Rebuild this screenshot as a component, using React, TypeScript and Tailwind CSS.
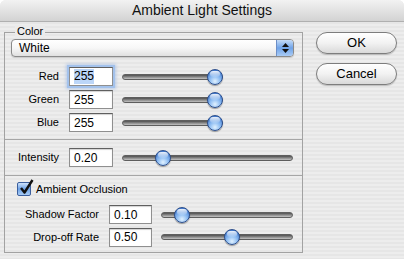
import React from "react";

const Slider: React.FC<{ value: number; width: string }> = ({ value, width }) => {
  return (
    <div className={`relative h-[16px] ${width}`}>
      <div className="absolute left-0 right-0 top-[5px] h-[6px] rounded-full border border-[#5e5e5e] bg-gradient-to-b from-[#4f4f4f] via-[#8a8a8a] to-[#c4c4c4]" />
      <div
        className="absolute top-0 h-[16px] w-[16px] rounded-full border border-[#2d4f8c] bg-[radial-gradient(circle_at_50%_80%,#e0f1ff_0%,#8dbcf2_40%,#3f78cf_85%,#2c5aa8_100%)] shadow-[0_1px_1px_rgba(0,0,0,0.35)]"
        style={{ left: `calc(${value * 100}% - ${value * 16}px)` }}
      >
        <div className="mx-auto mt-[1px] h-[6px] w-[10px] rounded-full bg-gradient-to-b from-white/90 to-white/10" />
      </div>
    </div>
  );
};

const Field: React.FC<{ value: string; width: string; focused?: boolean }> = ({ value, width, focused }) => {
  return (
    <div
      className={`flex h-[19px] items-center border border-[#8f8f8f] border-t-[#5f5f5f] bg-white pl-[4px] text-[12px] text-black ${width} ${
        focused
          ? "shadow-[0_0_0_2px_#a3c2ec,0_0_3px_3px_rgba(140,175,225,0.55)]"
          : "shadow-[inset_0_1px_1px_rgba(0,0,0,0.18)]"
      }`}
    >
      {focused ? <span className="bg-[#bcd6f8] leading-[15px]">{value}</span> : value}
    </div>
  );
};

const AquaButton: React.FC<{ label: string }> = ({ label }) => (
  <button className="h-[22px] w-[81px] rounded-full border border-[#7d7d7d] bg-gradient-to-b from-white via-[#f2f2f2] to-[#d9d9d9] text-[13px] text-black shadow-[0_1px_1px_rgba(0,0,0,0.2)]">
    {label}
  </button>
);

export default function App() {
  return (
    <div className="h-[259px] w-[404px] overflow-hidden bg-white font-['Liberation_Sans',Arial,sans-serif] text-[11px] text-black">
      <div className="flex h-full flex-col rounded-t-[6px] bg-[repeating-linear-gradient(to_bottom,#ededed_0px,#ededed_2px,#e6e6e6_2px,#e6e6e6_4px)]">
        {/* title bar */}
        <div className="flex h-[22px] items-center justify-center rounded-t-[6px] border-b border-[#b0b0b0] bg-gradient-to-b from-[#f2f2f2] to-[#d3d3d3] text-[14px] text-[#111]">
          Ambient Light Settings
        </div>

        <div className="flex flex-1 pl-[4px]">
          {/* group box */}
          <div className="relative mt-[10px] flex h-[221px] w-[299px] flex-col border border-[#a2a2a2]">
            <span className="absolute left-[10px] top-[-8px] bg-[#ebebeb] px-[2px] text-[11px] leading-[13px]">
              Color
            </span>

            <div className="flex h-[106px] flex-col pt-[6px]">
              <div className="ml-[6px] flex h-[18px] w-[283px] items-center overflow-hidden rounded-[4px] border border-[#8a8a8a] bg-gradient-to-b from-white via-[#f7f7f7] to-[#e0e0e0] shadow-[0_1px_1px_rgba(0,0,0,0.15)]">
                <span className="flex-1 pl-[7px] text-[12px]">White</span>
                <div className="flex h-full w-[17px] flex-col items-center justify-center gap-[2px] border-l border-[#6d8fc7] bg-gradient-to-b from-[#c5dcf8] via-[#6fa3e8] to-[#a9cbf5]">
                  <svg width="7" height="4" viewBox="0 0 7 4">
                    <path d="M3.5 0 L7 4 L0 4 Z" fill="#111" />
                  </svg>
                  <svg width="7" height="4" viewBox="0 0 7 4">
                    <path d="M0 0 L7 0 L3.5 4 Z" fill="#111" />
                  </svg>
                </div>
              </div>

              <div className="mt-[8px] flex flex-col">
                {[
                  { label: "Red", focused: true },
                  { label: "Green", focused: false },
                  { label: "Blue", focused: false },
                ].map((row) => (
                  <div key={row.label} className="flex h-[23px] items-center">
                    <span className="w-[54px] text-right">{row.label}</span>
                    <div className="ml-[10px]">
                      <Field value="255" width="w-[44px]" focused={row.focused} />
                    </div>
                    <div className="ml-[9px]">
                      <Slider value={1} width="w-[101px]" />
                    </div>
                  </div>
                ))}
              </div>
            </div>

            <div className="h-[1px] bg-[#a6a6a6]" />

            <div className="flex h-[35px] items-center">
              <span className="w-[54px] text-right">Intensity</span>
              <div className="ml-[10px]">
                <Field value="0.20" width="w-[44px]" />
              </div>
              <div className="ml-[9px]">
                <Slider value={0.21} width="w-[171px]" />
              </div>
            </div>

            <div className="h-[1px] bg-[#a6a6a6]" />

            <div className="flex flex-1 flex-col pt-[5px]">
              <div className="flex h-[16px] items-center">
                <div className="relative ml-[12px] h-[14px] w-[14px] rounded-[2px] border border-[#3b5f9e] bg-gradient-to-b from-[#cfe3fb] via-[#6da2e6] to-[#a8ccf6]">
                  <svg className="absolute left-[1px] top-[-4px]" width="15" height="16" viewBox="0 0 15 16">
                    <path d="M2 9 L5.5 13.5 L13.5 1" stroke="#111" strokeWidth="2.4" fill="none" strokeLinejoin="round" />
                  </svg>
                </div>
                <span className="ml-[5px]">Ambient Occlusion</span>
              </div>

              <div className="mt-[6px] flex h-[23px] items-center">
                <span className="w-[94px] text-right">Shadow Factor</span>
                <div className="ml-[10px]">
                  <Field value="0.10" width="w-[43px]" />
                </div>
                <div className="ml-[9px]">
                  <Slider value={0.11} width="w-[132px]" />
                </div>
              </div>

              <div className="flex h-[22px] items-center">
                <span className="w-[94px] text-right">Drop-off Rate</span>
                <div className="ml-[10px]">
                  <Field value="0.50" width="w-[43px]" />
                </div>
                <div className="ml-[9px]">
                  <Slider value={0.54} width="w-[132px]" />
                </div>
              </div>
            </div>
          </div>

          {/* buttons */}
          <div className="ml-[13px] mt-[10px] flex flex-col gap-[9px]">
            <AquaButton label="OK" />
            <AquaButton label="Cancel" />
          </div>
        </div>
      </div>
    </div>
  );
}
